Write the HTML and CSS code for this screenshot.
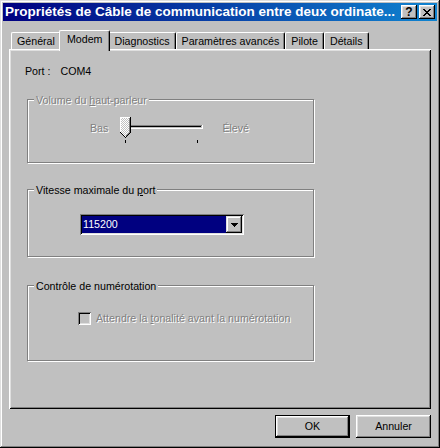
FILE: index.html
```html
<!DOCTYPE html>
<html>
<head>
  <meta charset="UTF-8">
  <title>Propriétés de Câble de communication</title>
  <link rel="stylesheet" href="styles.css">
</head>
<body>
  <div class="window">
    <div class="titlebar">
      <span class="title">Propriétés de Câble de communication entre deux ordinate...</span>
      <div class="title-buttons">
        <div class="tbtn help">?</div>
        <div class="tbtn">
          <svg width="8" height="7" viewBox="0 0 8 7" shape-rendering="crispEdges">
            <path d="M0 0h2v1h-2z M6 0h2v1h-2z M1 1h2v1h-2z M5 1h2v1h-2z M2 2h4v1h-4z M3 3h2v1h-2z M2 4h4v1h-4z M1 5h2v1h-2z M5 5h2v1h-2z M0 6h2v1h-2z M6 6h2v1h-2z" fill="#000"/>
          </svg>
        </div>
      </div>
    </div>

    <div class="content">
      <div class="tabs">
        <div class="tab">Général</div>
        <div class="tab active">Modem</div>
        <div class="tab">Diagnostics</div>
        <div class="tab">Paramètres avancés</div>
        <div class="tab">Pilote</div>
        <div class="tab">Détails</div>
      </div>

      <div class="panel">
        <div class="port-row">
          <span>Port :</span>
          <span>COM4</span>
        </div>

        <div class="group g-volume disabled">
          <div class="group-title">Volume du <u>h</u>aut-parleur</div>
          <div class="slider-row">
            <span>Bas</span>
            <!-- trackbar, disabled -->
            <svg class="slider" width="90" height="30" viewBox="0 0 90 30" shape-rendering="crispEdges">
              <defs>
                <pattern id="dither" width="2" height="2" patternUnits="userSpaceOnUse">
                  <rect width="2" height="2" fill="#c0c0c0"/>
                  <rect width="1" height="1" fill="#fff"/>
                  <rect x="1" y="1" width="1" height="1" fill="#fff"/>
                </pattern>
              </defs>
              <rect x="7" y="10" width="79" height="1" fill="#808080"/>
              <rect x="7" y="10" width="1" height="4" fill="#808080"/>
              <rect x="8" y="11" width="77" height="1" fill="#000"/>
              <rect x="8" y="11" width="1" height="2" fill="#000"/>
              <rect x="7" y="13" width="80" height="1" fill="#fff"/>
              <rect x="86" y="10" width="1" height="4" fill="#fff"/>
              <polygon points="4,2 15,2 15,17 9.5,22.5 4,17" fill="url(#dither)"/>
              <path d="M4.5 18 V2.5 H14" stroke="#fff" fill="none"/>
              <path d="M13.5 3 V17.5 L9.5 21.5" stroke="#808080" fill="none"/>
              <path d="M14.5 2 V17.5 L9.5 22.5 L4.5 17.5" stroke="#000" fill="none"/>
              <rect x="9" y="25" width="1" height="3" fill="#000"/>
              <rect x="81" y="25" width="1" height="3" fill="#000"/>
            </svg>
            <span>Élevé</span>
          </div>
        </div>

        <div class="group g-speed">
          <div class="group-title">Vitesse maximale du <u>p</u>ort</div>
          <div class="combo">
            <div class="combo-value">115200</div>
            <div class="combo-btn">
              <svg width="7" height="4" viewBox="0 0 7 4" shape-rendering="crispEdges">
                <path d="M0 0h7v1h-7z M1 1h5v1h-5z M2 2h3v1h-3z M3 3h1v1h-1z" fill="#000"/>
              </svg>
            </div>
          </div>
        </div>

        <div class="group g-dial">
          <div class="group-title">Contrôle de numérotation</div>
          <div class="check-row disabled">
            <span class="checkbox"></span>
            <span>Attendre la <u>t</u>onalité avant la numérotation</span>
          </div>
        </div>
      </div>

      <div class="buttons">
        <div class="btn default">OK</div>
        <div class="btn">Annuler</div>
      </div>
    </div>
  </div>
</body>
</html>
```

FILE: styles.css
```css
body {
  margin: 0;
  background-color: #c0c0c0;
  font-family: "Liberation Sans", Arial, sans-serif;
  font-size: 8pt;
  line-height: 13px;
  color: #000;
}

.window {
  width: 440px;
  height: 448px;
  box-sizing: border-box;
  padding: 3px;
  display: flex;
  flex-direction: column;
  background-color: #c0c0c0;
  box-shadow: inset -1px -1px #000, inset 1px 1px #dfdfdf,
              inset -2px -2px #808080, inset 2px 2px #fff;
}

/* title bar */
.titlebar {
  height: 18px;
  flex-shrink: 0;
  display: flex;
  align-items: center;
  justify-content: space-between;
  padding: 0 2px;
  background: linear-gradient(to right, #000080, #1084d0);
  color: white;
}
.title {
  font-size: 13.5px;
  font-weight: bold;
  line-height: 18px;
  white-space: nowrap;
  overflow: hidden;
}
.title-buttons {
  display: flex;
  flex-shrink: 0;
  gap: 2px;
}
.tbtn {
  width: 16px;
  height: 14px;
  display: flex;
  align-items: center;
  justify-content: center;
  background-color: #c0c0c0;
  color: #000;
  box-shadow: inset -1px -1px #000, inset 1px 1px #fff,
              inset -2px -2px #808080, inset 2px 2px #dfdfdf;
}
.tbtn.help {
  font-size: 12px;
  font-weight: bold;
  line-height: 14px;
}

.content {
  flex: 1;
  display: flex;
  flex-direction: column;
  padding: 0 6px 7px;
}

/* tabs */
.tabs {
  display: flex;
  align-items: flex-end;
  margin-top: 9px;
  padding-left: 2px;
}
.tab {
  padding: 2px 5px 1px;
  border-top: 1px solid #fff;
  border-left: 1px solid #fff;
  border-right: 1px solid #000;
  border-radius: 2px 2px 0 0;
  box-shadow: inset -1px 0 #808080;
  background-color: #c0c0c0;
  white-space: nowrap;
}
.tab.active {
  position: relative;
  z-index: 1;
  margin: 0 -2px -2px;
  padding: 2px 7px 5px;
}

.panel {
  flex: 1;
  padding: 16px 0 0 16px;
  box-shadow: inset 1px 1px #fff, inset -1px -1px #000,
              inset 2px 2px #dfdfdf, inset -2px -2px #808080;
}

.port-row {
  display: flex;
  gap: 10px;
}

/* group boxes */
.group {
  width: 287px;
  box-sizing: border-box;
  margin-left: 2px;
  border: 1px solid #808080;
  box-shadow: 1px 1px #fff, inset 1px 1px #fff;
}
.group-title {
  width: fit-content;
  margin: -6px 0 0 6px;
  padding: 0 2px;
  background-color: #c0c0c0;
}
.g-volume {
  margin-top: 21px;
  padding-bottom: 17px;
}
.g-speed {
  margin-top: 26px;
  padding-bottom: 21px;
}
.g-dial {
  margin-top: 28px;
  padding-bottom: 35px;
}

.disabled {
  color: #808080;
  text-shadow: 1px 1px #fff;
}

.slider-row {
  display: flex;
  align-items: flex-start;
  margin-top: 8px;
  padding-left: 62px;
}
.slider-row span {
  margin-top: 7px;
}
.slider {
  margin: 0 16px 0 8px;
}

/* drop down list */
.combo {
  width: 164px;
  height: 21px;
  box-sizing: border-box;
  margin: 17px 0 0 52px;
  padding: 2px;
  display: flex;
  box-shadow: inset 1px 1px #808080, inset -1px -1px #fff,
              inset 2px 2px #000, inset -2px -2px #dfdfdf;
}
.combo-value {
  flex: 1;
  padding-left: 1px;
  background-color: #000080;
  color: white;
  line-height: 17px;
}
.combo-btn {
  width: 16px;
  display: flex;
  align-items: center;
  justify-content: center;
  background-color: #c0c0c0;
  box-shadow: inset -1px -1px #000, inset 1px 1px #dfdfdf,
              inset -2px -2px #808080, inset 2px 2px #fff;
}

.check-row {
  display: flex;
  gap: 5px;
  margin: 19px 0 0 50px;
}
.checkbox {
  width: 13px;
  height: 13px;
  box-shadow: inset 1px 1px #808080, inset -1px -1px #fff,
              inset 2px 2px #000, inset -2px -2px #dfdfdf;
}

/* dialog buttons */
.buttons {
  display: flex;
  justify-content: flex-end;
  gap: 6px;
  margin-top: 6px;
}
.btn {
  width: 75px;
  height: 23px;
  box-sizing: border-box;
  display: flex;
  align-items: center;
  justify-content: center;
  box-shadow: inset -1px -1px #000, inset 1px 1px #fff,
              inset -2px -2px #808080, inset 2px 2px #dfdfdf;
}
.btn.default {
  border: 1px solid #000;
}
```
